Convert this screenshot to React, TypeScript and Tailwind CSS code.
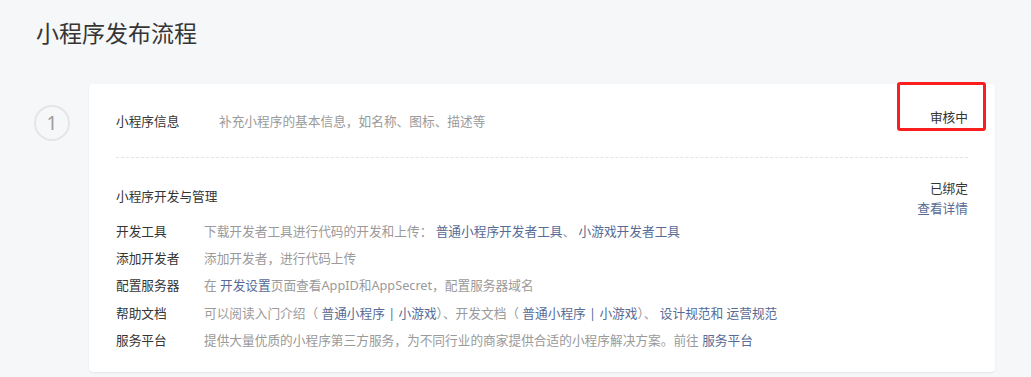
import React from 'react';

const link = 'text-[#576b95]';

const rows: { label: string; desc: React.ReactNode }[] = [
    {
        label: '开发工具',
        desc: (
            <>
                下载开发者工具进行代码的开发和上传：{' '}
                <a className={link}>普通小程序开发者工具</a>、{' '}
                <a className={link}>小游戏开发者工具</a>
            </>
        ),
    },
    { label: '添加开发者', desc: '添加开发者，进行代码上传' },
    {
        label: '配置服务器',
        desc: (
            <>
                在 <a className={link}>开发设置</a>页面查看AppID和AppSecret，配置服务器域名
            </>
        ),
    },
    {
        label: '帮助文档',
        desc: (
            <>
                可以阅读入门介绍（ <a className={link}>普通小程序</a>
                <span className={link}> | </span>
                <a className={link}>小游戏</a>）、开发文档（ <a className={link}>普通小程序</a>
                <span className={link}> | </span>
                <a className={link}>小游戏</a>）、 <a className={link}>设计规范</a>
                <span className={link}>和</span> <a className={link}>运营规范</a>
            </>
        ),
    },
    {
        label: '服务平台',
        desc: (
            <>
                提供大量优质的小程序第三方服务，为不同行业的商家提供合适的小程序解决方案。前往{' '}
                <a className={link}>服务平台</a>
            </>
        ),
    },
];

export default function App() {
    return (
        <div
            className="min-h-[377px] bg-[#f6f7f9] pt-[17px] pr-[36px] pl-[34px] text-[12.7px] text-[#353535]"
            style={{ fontFamily: '"Noto Sans", "Noto Sans CJK SC", sans-serif' }}
        >
            {/* ─── Title ─── */}
            <h2 className="ml-[2px] text-[23px] leading-[32px] font-normal text-[#353535]">小程序发布流程</h2>

            <div className="mt-[35px] flex items-start gap-[19px]">
                {/* step number */}
                <div className="mt-[21px] flex h-[36px] w-[36px] shrink-0 items-center justify-center rounded-full border-2 border-[#e5e5e5] text-[19px] text-[#9b9b9b]">
                    1
                </div>

                {/* ─── Card ─── */}
                <div className="relative flex-1 rounded-[4px] bg-white px-[27px] pt-[27px] pb-[18px] shadow-[0_1px_2px_rgba(0,0,0,0.08)]">
                    <div className="flex items-start border-b border-dashed border-[#e4e4e4] pb-[26px] leading-[20px]">
                        <div className="w-[103px] shrink-0">小程序信息</div>
                        <div className="flex-1 text-[#9a9a9a]">补充小程序的基本信息，如名称、图标、描述等</div>
                        <div className="leading-[12px]">审核中</div>
                    </div>

                    <div className="pt-[20px]">
                        <div className="flex items-start justify-between leading-[20px]">
                            <div className="mt-[8px]">小程序开发与管理</div>
                            <div className="text-right">
                                <div>已绑定</div>
                                <a className={link}>查看详情</a>
                            </div>
                        </div>
                        {rows.map((r) => (
                            <div key={r.label} className="flex leading-[27.2px]">
                                <div className="w-[88px] shrink-0">{r.label}</div>
                                <div className="flex-1 text-[#9a9a9a]">{r.desc}</div>
                            </div>
                        ))}
                    </div>

                    {/* annotation box */}
                    <div className="absolute top-[-2px] right-[9px] h-[49px] w-[89px] rounded-[3px] border-[3px] border-[#fa1e1e]" />
                </div>
            </div>
        </div>
    );
}
